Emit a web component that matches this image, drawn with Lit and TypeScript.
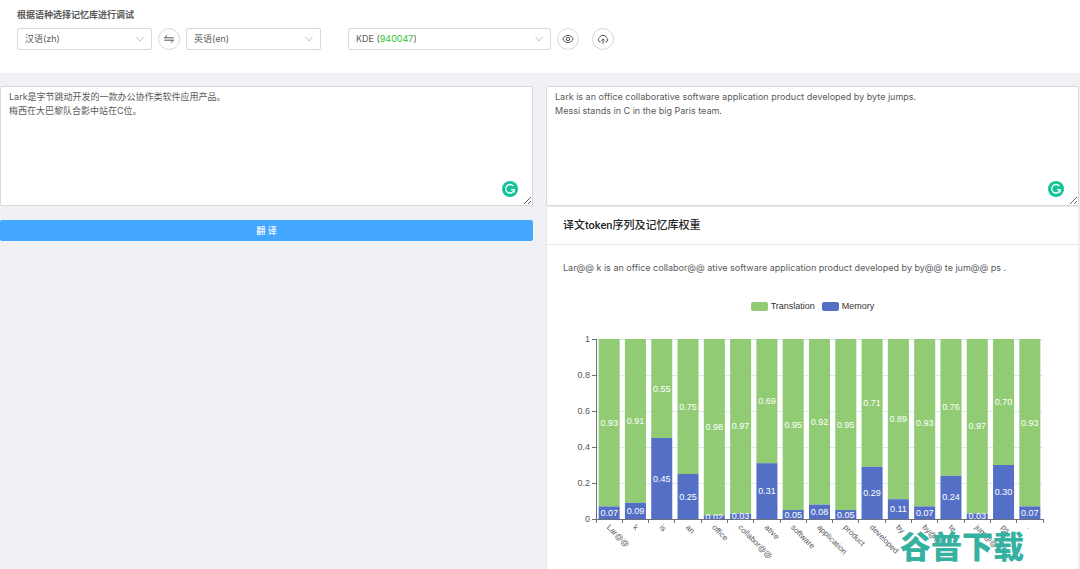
import { LitElement, html, svg, css } from "lit";
import { customElement, property, state } from "lit/decorators.js";

interface TokenWeight {
  token: string;
  memory: number;
}

const TOKENS: TokenWeight[] = [
  { token: "Lar@@", memory: 0.07 },
  { token: "k", memory: 0.09 },
  { token: "is", memory: 0.45 },
  { token: "an", memory: 0.25 },
  { token: "office", memory: 0.02 },
  { token: "collabor@@", memory: 0.03 },
  { token: "ative", memory: 0.31 },
  { token: "software", memory: 0.05 },
  { token: "application", memory: 0.08 },
  { token: "product", memory: 0.05 },
  { token: "developed", memory: 0.29 },
  { token: "by", memory: 0.11 },
  { token: "by@@", memory: 0.07 },
  { token: "te", memory: 0.24 },
  { token: "jum@@", memory: 0.03 },
  { token: "ps", memory: 0.3 },
  { token: ".", memory: 0.07 },
];

const chevron = html`<svg class="chevron" viewBox="0 0 8 6" aria-hidden="true">
  <path d="M0.5 0.8 L4 5.2 L7.5 0.8" fill="none" stroke="#bfbfbf" stroke-width="0.9" />
</svg>`;

/** Stacked bar chart of translation and memory weight per token. */
@customElement("weight-chart")
export class WeightChart extends LitElement {
  @property({ attribute: false }) data: TokenWeight[] = [];
  @state() private width = 531;
  private observer?: ResizeObserver;

  static styles = css`
    :host {
      display: block;
      font-family: "Liberation Sans", Arial, sans-serif;
      font-size: 9px;
    }
    .legend {
      display: flex;
      justify-content: center;
      gap: 7px;
      color: #333;
      line-height: 12px;
    }
    .key {
      display: flex;
      align-items: center;
      gap: 3px;
    }
    .swatch {
      width: 17px;
      height: 9px;
      border-radius: 2px;
    }
    .translation {
      background: #91cc75;
      fill: #91cc75;
    }
    .memory {
      background: #5470c6;
      fill: #5470c6;
    }
    .plot {
      display: block;
      width: 100%;
      height: 250px;
    }
    .grid {
      stroke: #e0e6f1;
    }
    .axis {
      stroke: #6e7079;
    }
    .label {
      fill: #55575e;
    }
    .token {
      font-size: 8px;
    }
    .value {
      fill: #fff;
      text-anchor: middle;
    }
    .end {
      text-anchor: end;
    }
  `;

  connectedCallback() {
    super.connectedCallback();
    this.observer = new ResizeObserver(([entry]) => {
      this.width = entry.contentRect.width;
    });
    this.observer.observe(this);
  }

  disconnectedCallback() {
    this.observer?.disconnect();
    super.disconnectedCallback();
  }

  render() {
    const left = 49;
    const right = this.width - 35;
    const top = 27;
    const bottom = 207;
    const span = bottom - top;
    const step = (right - left) / this.data.length;
    const bar = step * 0.8;
    const y = (v: number) => bottom - v * span;
    return html`
      <div class="legend">
        <span class="key"><i class="swatch translation"></i>Translation</span>
        <span class="key"><i class="swatch memory"></i>Memory</span>
      </div>
      <svg class="plot" role="img" aria-label="Translation and memory weight per token">
        ${[0, 0.2, 0.4, 0.6, 0.8, 1].map(
          (v) => svg`
            <line class="grid" x1=${left} x2=${right} y1=${y(v)} y2=${y(v)} shape-rendering="crispEdges" />
            <line class="axis" x1=${left - 4} x2=${left} y1=${y(v)} y2=${y(v)} shape-rendering="crispEdges" />
            <text class="label end" x=${left - 6} y=${y(v) + 3}>${v}</text>`
        )}
        ${this.data.map((d, i) => {
          const cx = left + (i + 0.5) * step;
          const x = cx - bar / 2;
          const split = y(d.memory);
          return svg`
            <rect class="translation" x=${x} y=${top} width=${bar} height=${split - top} />
            <rect class="memory" x=${x} y=${split} width=${bar} height=${bottom - split} />
            <text class="value" x=${cx} y=${(top + split) / 2 + 3}>${(1 - d.memory).toFixed(2)}</text>
            <text class="value" x=${cx} y=${(split + bottom) / 2 + 3}>${d.memory.toFixed(2)}</text>
            <text class="label token" transform="translate(${cx} ${bottom + 6}) rotate(45)" y="4">${d.token}</text>`;
        })}
        <line class="axis" x1=${left} x2=${left} y1=${top} y2=${bottom} shape-rendering="crispEdges" />
        <line class="axis" x1=${left} x2=${right} y1=${bottom} y2=${bottom} shape-rendering="crispEdges" />
        ${Array.from({ length: this.data.length + 1 }, (_, i) => {
          const x = left + i * step;
          return svg`<line class="axis" x1=${x} x2=${x} y1=${bottom} y2=${bottom + 4} shape-rendering="crispEdges" />`;
        })}
      </svg>
    `;
  }
}

@customElement("app-root")
export class AppRoot extends LitElement {
  static styles = css`
    :host {
      display: flex;
      flex-direction: column;
      position: relative;
      box-sizing: border-box;
      height: 100vh;
      min-height: 480px;
      overflow: hidden;
      background: #f0f1f5;
      color: #595959;
      font: 9px/14px Inter, "Noto Sans CJK SC", sans-serif;
    }
    * {
      box-sizing: border-box;
    }
    .toolbar {
      background: #fff;
      padding: 8px 17px 23px;
    }
    .heading {
      margin: 0 0 6px;
      font-size: 9px;
      line-height: 14px;
      font-weight: 700;
    }
    .controls {
      display: flex;
      align-items: center;
      gap: 6px;
    }
    .picker {
      position: relative;
      display: flex;
      align-items: center;
      width: 135px;
    }
    .corpus {
      width: 203px;
      margin-left: 21px;
    }
    select {
      appearance: none;
      width: 100%;
      height: 22px;
      padding: 0 20px 0 7px;
      border: 1px solid #d9d9d9;
      border-radius: 2px;
      background: #fff;
      color: inherit;
      font: inherit;
    }
    .corpus select {
      color: transparent;
    }
    .corpus option {
      color: #595959;
    }
    .chosen {
      position: absolute;
      left: 8px;
      pointer-events: none;
    }
    .count {
      color: #2fc22f;
    }
    .chevron {
      position: absolute;
      right: 8px;
      width: 8px;
      height: 6px;
      pointer-events: none;
    }
    .round {
      display: grid;
      place-items: center;
      width: 22px;
      height: 22px;
      padding: 0;
      border: 1px solid #d9d9d9;
      border-radius: 50%;
      background: #fff;
      color: #555;
    }
    .upload {
      margin-left: 7px;
    }
    .round svg {
      width: 12px;
      height: 12px;
      fill: none;
      stroke: currentColor;
    }
    .columns {
      flex: 1;
      display: grid;
      grid-template-columns: 1fr 1fr;
      gap: 13px;
      padding: 13px 1px 0 0;
    }
    .column {
      display: flex;
      flex-direction: column;
      min-width: 0;
    }
    .editor {
      position: relative;
      display: flex;
    }
    textarea {
      width: 100%;
      height: 120px;
      padding: 3px 8px;
      border: 1px solid #d9d9d9;
      border-radius: 2px;
      background: #fff;
      color: inherit;
      font: inherit;
      resize: vertical;
    }
    .badge {
      position: absolute;
      right: 15px;
      bottom: 9px;
      width: 16px;
      height: 16px;
    }
    .translate {
      height: 21px;
      margin-top: 14px;
      border: 0;
      border-radius: 2px;
      background: #43a6ff;
      color: #fff;
      font: inherit;
      font-weight: 500;
    }
    .card {
      flex: 1;
      border: 1px solid #e8e8e8;
      border-bottom: 0;
      background: #fff;
    }
    .title {
      margin: 0;
      padding: 11px 16px 10px;
      border-bottom: 1px solid #e8e8e8;
      color: #262626;
      font: 500 11px/16px Roboto, "Noto Sans CJK SC", sans-serif;
    }
    .tokens {
      margin: 0;
      padding: 16px 16px 25px;
    }
    .watermark {
      position: absolute;
      right: 56px;
      bottom: 0;
      color: #36b0a0;
      font: 900 31px/48px "Noto Sans CJK SC", sans-serif;
      pointer-events: none;
    }
  `;

  private badge() {
    return html`<svg class="badge" viewBox="0 0 16 16" aria-hidden="true">
      <circle cx="8" cy="8" r="8" fill="#15c39a" />
      <path d="M11.4 5.2 A4.3 4.3 0 1 0 12.2 8.7 H9.1" fill="none" stroke="#fff" stroke-width="1.3" />
      <path d="M10 10.2 L12.6 9 V12 Z" fill="#fff" />
    </svg>`;
  }

  render() {
    return html`
      <header class="toolbar">
        <h1 class="heading">根据语种选择记忆库进行调试</h1>
        <div class="controls">
          <label class="picker">
            <select aria-label="源语言"><option>汉语(zh)</option></select>
            ${chevron}
          </label>
          <button class="round" aria-label="交换语言">
            <svg viewBox="0 0 12 12"><path d="M1.3 4.8 H10.7 M1.5 4.8 L4.2 2.3 M1.3 7.2 H10.7 M10.5 7.2 L7.8 9.7" /></svg>
          </button>
          <label class="picker">
            <select aria-label="目标语言"><option>英语(en)</option></select>
            ${chevron}
          </label>
          <label class="picker corpus">
            <select aria-label="记忆库"><option>KDE (940047)</option></select>
            <span class="chosen" aria-hidden="true">KDE (<span class="count">940047</span>)</span>
            ${chevron}
          </label>
          <button class="round" aria-label="查看">
            <svg viewBox="0 0 12 12">
              <path d="M0.8 6 C3.2 1.2 8.8 1.2 11.2 6 C8.8 10.8 3.2 10.8 0.8 6 Z" />
              <circle cx="6" cy="6" r="1.8" />
            </svg>
          </button>
          <button class="round upload" aria-label="上传">
            <svg viewBox="0 0 12 12">
              <path d="M3.6 8.9 H3 A2.2 2.2 0 0 1 2.4 4.8 A3.8 3.8 0 0 1 9.6 4.8 A2.2 2.2 0 0 1 9 8.9 H8.4 M6 10.8 V6 M4.5 7.5 L6 5.9 L7.5 7.5" />
            </svg>
          </button>
        </div>
      </header>
      <main class="columns">
        <section class="column">
          <div class="editor">
            <textarea aria-label="原文" spellcheck="false" .value=${"Lark是字节跳动开发的一款办公协作类软件应用产品。\n梅西在大巴黎队合影中站在C位。"}></textarea>
            ${this.badge()}
          </div>
          <button class="translate">翻 译</button>
        </section>
        <section class="column">
          <div class="editor">
            <textarea aria-label="译文" spellcheck="false" .value=${"Lark is an office collaborative software application product developed by byte jumps.\nMessi stands in C in the big Paris team."}></textarea>
            ${this.badge()}
          </div>
          <article class="card">
            <h2 class="title">译文token序列及记忆库权重</h2>
            <p class="tokens">
              Lar@@ k is an office collabor@@ ative software application product developed by by@@ te jum@@ ps .
            </p>
            <weight-chart .data=${TOKENS}></weight-chart>
          </article>
        </section>
      </main>
      <div class="watermark">谷普下载</div>
    `;
  }
}
